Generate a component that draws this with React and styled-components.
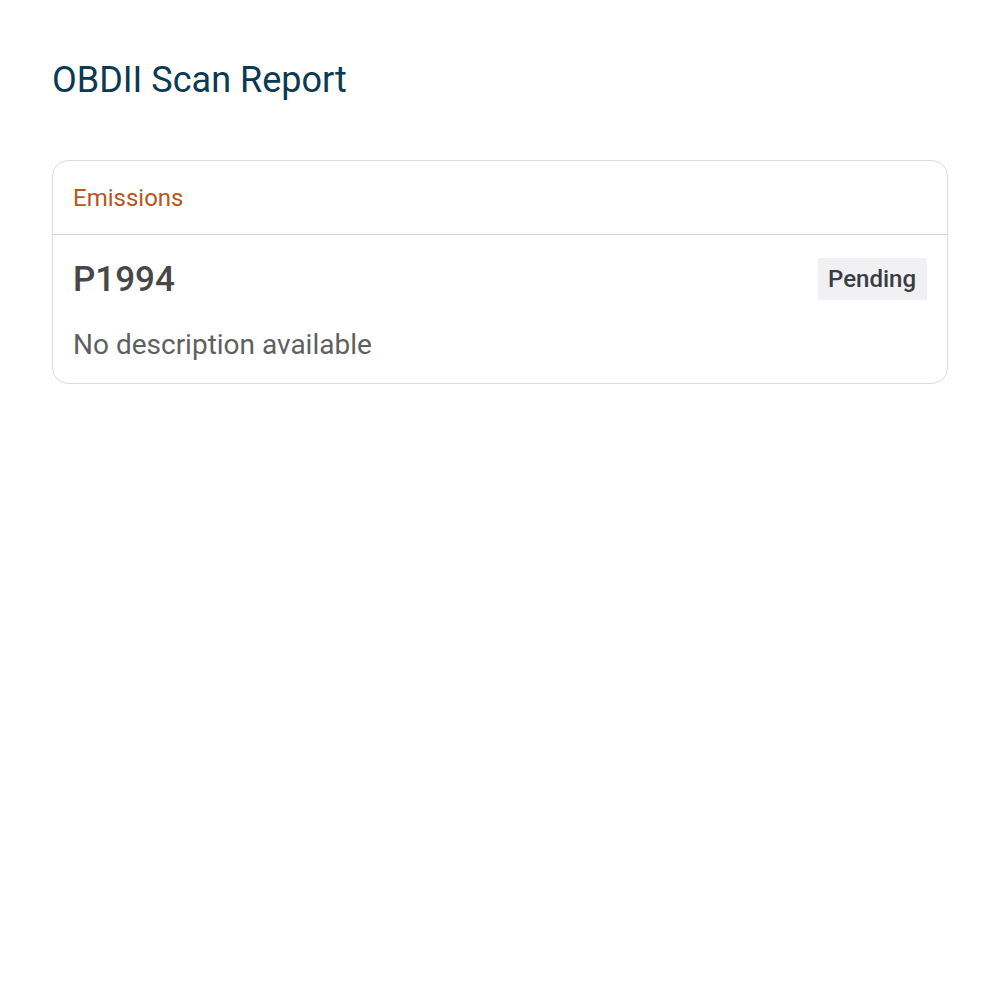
import styled, { createGlobalStyle } from "styled-components";

const GlobalStyle = createGlobalStyle`
    body {
        margin: 0;
        background: #ffffff;
        font-family: Roboto, "Noto Sans", Arial, sans-serif;
    }
`;

const Page = styled.div`
    padding: 56px 52px;
`;

const Title = styled.h1`
    margin: 0 0 56px;
    font-size: 36px;
    font-weight: 400;
    line-height: 48px;
    color: #0b3a52;
`;

const Card = styled.section`
    border: 1px solid #dcdcdc;
    border-radius: 16px;
    overflow: hidden;
`;

const CardHeader = styled.div`
    display: flex;
    align-items: center;
    height: 73px;
    padding: 0 20px;
    border-bottom: 1px solid #d4d4d4;
    font-size: 24px;
    color: #b8561d;
`;

const CardBody = styled.div`
    padding: 23px 20px 22px;
`;

const Row = styled.div`
    display: flex;
    align-items: center;
    justify-content: space-between;
`;

const Code = styled.span`
    font-size: 35px;
    font-weight: 500;
    color: #474747;
`;

const Badge = styled.span`
    display: inline-flex;
    align-items: center;
    height: 42px;
    padding: 0 11px 0 10px;
    background: #f1f1f4;
    font-size: 24px;
    font-weight: 500;
    color: #3b3b42;
`;

const Description = styled.p`
    margin: 28px 0 0;
    font-size: 28px;
    color: #5f5f5f;
`;

export default function App() {
    return (
        <>
            <GlobalStyle />
            <Page>
                <Title>OBDII Scan Report</Title>
                <Card>
                    <CardHeader>Emissions</CardHeader>
                    <CardBody>
                        <Row>
                            <Code>P1994</Code>
                            <Badge>Pending</Badge>
                        </Row>
                        <Description>No description available</Description>
                    </CardBody>
                </Card>
            </Page>
        </>
    );
}
